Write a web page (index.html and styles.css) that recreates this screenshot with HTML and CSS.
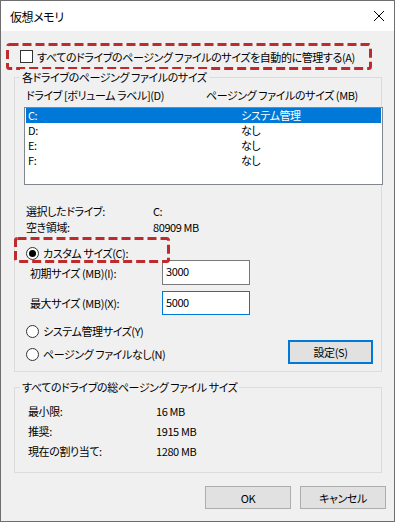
FILE: index.html
```html
<!DOCTYPE html>
<html lang="ja">
<head>
    <meta charset="UTF-8">
    <meta name="viewport" content="width=device-width, initial-scale=1.0">
    <title>仮想メモリ</title>
    <link rel="stylesheet" href="styles.css">
</head>
<body>
    <div class="window">
        <div class="titlebar">
            <span class="title">仮想メモリ</span>
            <svg class="close" width="12" height="12" viewBox="0 0 12 12">
                <path d="M1 1 L11 11 M11 1 L1 11" stroke="#000" stroke-width="1" fill="none"/>
            </svg>
        </div>

        <div class="auto-box mark">
            <svg class="dash" width="366" height="27" viewBox="0 0 366 27">
                <rect x="1.5" y="1.5" width="363" height="24" rx="2"/>
            </svg>
            <span class="checkbox"></span>
            <span class="auto-text">すべてのドライブのページング ファイルのサイズを自動的に管理する(A)</span>
        </div>

        <div class="group group-drives">
            <span class="group-title">各ドライブのページング ファイルのサイズ</span>
            <div class="list-head">
                <span class="col-drive">ドライブ [ボリューム ラベル](D)</span>
                <span>ページング ファイルのサイズ (MB)</span>
            </div>
            <div class="list">
                <div class="list-row selected"><span>C:</span><span>システム管理</span></div>
                <div class="list-row"><span>D:</span><span>なし</span></div>
                <div class="list-row"><span>E:</span><span>なし</span></div>
                <div class="list-row"><span>F:</span><span>なし</span></div>
            </div>
            <div class="info-row info-first"><span class="info-label">選択したドライブ:</span><span>C:</span></div>
            <div class="info-row"><span class="info-label">空き領域:</span><span>80909 MB</span></div>

            <div class="custom-box mark">
                <svg class="dash" width="156" height="26" viewBox="0 0 156 26">
                    <rect x="1.5" y="1.5" width="153" height="23" rx="2"/>
                </svg>
                <span class="radio checked"></span>
                <span class="custom-text">カスタム サイズ(C):</span>
            </div>
            <div class="size-row size-initial">
                <span class="size-label">初期サイズ (MB)(I):</span>
                <div class="textbox">3000</div>
            </div>
            <div class="size-row size-max">
                <span class="size-label">最大サイズ (MB)(X):</span>
                <div class="textbox focused">5000</div>
            </div>
            <div class="option-row">
                <div class="options">
                    <div class="option"><span class="radio"></span><span>システム管理サイズ(Y)</span></div>
                    <div class="option"><span class="radio"></span><span>ページング ファイルなし(N)</span></div>
                </div>
                <div class="btn btn-set">設定(S)</div>
            </div>
        </div>

        <div class="group group-total">
            <span class="group-title">すべてのドライブの総ページング ファイル サイズ</span>
            <div class="total-row total-first"><span class="total-label">最小限:</span><span>16 MB</span></div>
            <div class="total-row"><span class="total-label">推奨:</span><span>1915 MB</span></div>
            <div class="total-row"><span class="total-label">現在の割り当て:</span><span>1280 MB</span></div>
        </div>

        <div class="actions">
            <div class="btn">OK</div>
            <div class="btn">キャンセル</div>
        </div>
    </div>
</body>
</html>
```

FILE: styles.css
```css
body {
    margin: 0;
    background: #fff;
    font-family: "Noto Sans CJK JP", "Noto Sans", sans-serif;
    font-size: 11px;
    letter-spacing: -0.4px;
    font-feature-settings: "palt";
    color: #000;
}
.window {
    width: 395px;
    height: 522px;
    box-sizing: border-box;
    border: 1px solid #6e6e6e;
    background: #f0f0f0;
}
.titlebar {
    height: 30px;
    background: #fff;
    display: flex;
    align-items: center;
    justify-content: space-between;
    padding: 0 8px 0 9px;
}
.title {
    font-size: 12px;
}
.close {
    margin-right: 1px;
}
.mark {
    position: relative;
    box-sizing: border-box;
    display: flex;
    align-items: center;
}
.dash {
    position: absolute;
    top: 0;
    left: 0;
    pointer-events: none;
}
.dash rect {
    fill: none;
    stroke: #bf2a2c;
    stroke-width: 3;
    stroke-dasharray: 9 4;
}
.auto-box {
    margin: 12px 0 0 5px;
    width: 366px;
    height: 27px;
    padding-left: 14px;
}
.checkbox {
    width: 13px;
    height: 13px;
    box-sizing: border-box;
    border: 1px solid #333;
    background: #fff;
    margin-right: 4px;
    flex: none;
}
.auto-text {
    white-space: nowrap;
}
.group {
    position: relative;
    box-sizing: border-box;
    border: 1px solid #dcdcdc;
    width: 368px;
    margin-left: 13px;
}
.group-title {
    position: absolute;
    top: -9px;
    left: 5px;
    padding: 0 2px;
    line-height: 16px;
    background: #f0f0f0;
    white-space: nowrap;
}
.group-drives {
    margin-top: 7px;
    height: 295px;
}
.list-head {
    display: flex;
    height: 16px;
    line-height: 16px;
    margin-top: 9px;
    padding-left: 11px;
    white-space: nowrap;
}
.col-drive {
    width: 180px;
}
.list {
    margin: 4px 0 0 9px;
    width: 359px;
    height: 78px;
    box-sizing: border-box;
    border: 1px solid #82868f;
    background: #fff;
    padding: 0 1px;
}
.list-row {
    display: grid;
    grid-template-columns: 213px 1fr;
    height: 15px;
    line-height: 15px;
    padding-left: 2px;
}
.list-row.selected {
    background: #0078d7;
    color: #fff;
}
.info-row {
    display: flex;
    height: 16px;
    line-height: 16px;
    padding-left: 11px;
}
.info-first {
    margin-top: 18px;
}
.info-label {
    width: 127px;
}
.custom-box {
    margin: 2px 0 0 -1px;
    width: 156px;
    height: 26px;
    padding: 10px 0 0 12px;
    align-items: flex-start;
}
.radio {
    width: 13px;
    height: 13px;
    box-sizing: border-box;
    border: 1px solid #333;
    border-radius: 50%;
    background: #fff;
    margin-right: 4px;
    flex: none;
    display: flex;
    align-items: center;
    justify-content: center;
}
.radio.checked::after {
    content: "";
    width: 7px;
    height: 7px;
    border-radius: 50%;
    background: #000;
}
.custom-text {
    line-height: 13px;
    white-space: nowrap;
}
.size-row {
    display: flex;
    align-items: center;
    padding-left: 15px;
}
.size-initial {
    margin-top: -3px;
    height: 25px;
}
.size-max {
    margin-top: 6px;
    height: 24px;
}
.size-label {
    width: 132px;
    white-space: nowrap;
}
.textbox {
    width: 88px;
    height: 100%;
    box-sizing: border-box;
    border: 1px solid #7a7a7a;
    background: #fff;
    padding-left: 3px;
    line-height: 21px;
}
.textbox.focused {
    border-color: #0078d7;
    line-height: 20px;
}
.option-row {
    display: flex;
    justify-content: space-between;
    align-items: flex-start;
    margin-top: 8px;
    padding-left: 11px;
}
.options {
    display: flex;
    flex-direction: column;
    gap: 7px;
}
.option {
    display: flex;
    align-items: center;
    height: 16px;
    white-space: nowrap;
}
.btn {
    box-sizing: border-box;
    width: 86px;
    height: 23px;
    border: 1px solid #adadad;
    background: #e1e1e1;
    display: flex;
    align-items: center;
    justify-content: center;
}
.btn-set {
    width: 85px;
    height: 24px;
    border: 2px solid #0078d7;
    margin: 17px 8px 0 0;
}
.group-total {
    margin-top: 15px;
    height: 86px;
}
.total-row {
    display: flex;
    height: 20px;
    line-height: 20px;
    padding-left: 13px;
}
.total-first {
    margin-top: 13px;
}
.total-label {
    width: 128px;
}
.actions {
    display: flex;
    justify-content: flex-end;
    gap: 9px;
    margin-top: 13px;
    padding-right: 8px;
}
```
